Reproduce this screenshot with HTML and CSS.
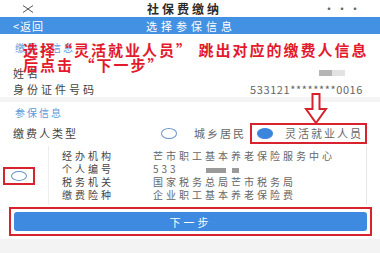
FILE: index.html
```html
<!DOCTYPE html>
<html lang="zh-CN">
<head>
    <meta charset="UTF-8">
    <meta name="viewport" content="width=device-width, initial-scale=1.0">
    <title>社保费缴纳</title>
    <link rel="stylesheet" href="styles.css">
</head>
<body>
    <div class="page">
        <div class="topbar">
            <svg class="close" width="12" height="8" viewBox="0 0 12 8">
                <path d="M1 0.5 L11 7.5 M11 0.5 L1 7.5" stroke="#555" stroke-width="1" fill="none"/>
            </svg>
            <span class="app-title">社保费缴纳</span>
            <span class="more">···</span>
        </div>

        <div class="navbar">
            <span class="back">&lt;返回</span>
            <span class="nav-title">选择参保信息</span>
            <span></span>
        </div>

        <div class="section">
            <div class="section-head">缴费人信息</div>
            <div class="row">
                <span>姓名</span>
                <span class="blur-name"><i class="dark"></i><i class="light"></i></span>
            </div>
            <div class="row">
                <span>身份证件号码</span>
                <span class="idno">533121********0016</span>
            </div>
        </div>

        <div class="gap"></div>

        <div class="section">
            <div class="section-head head2">参保信息</div>
            <div class="type-row">
                <span>缴费人类型</span>
                <div class="choices">
                    <span class="radio"></span>
                    <span class="choice-label">城乡居民</span>
                    <div class="choice-picked">
                        <span class="radio on"></span>
                        <span class="choice-label">灵活就业人员</span>
                    </div>
                </div>
            </div>
        </div>

        <div class="record">
            <div class="record-pick">
                <div class="pick-box"><span class="radio small"></span></div>
            </div>
            <div class="record-card">
                <div class="info"><span class="k">经办机构</span><span>芒市职工基本养老保险服务中心</span></div>
                <div class="info"><span class="k">个人编号</span><span>533 <i class="blot b1"></i><i class="blot b2"></i></span></div>
                <div class="info"><span class="k">税务机关</span><span>国家税务总局芒市税务局</span></div>
                <div class="info"><span class="k">缴费险种</span><span>企业职工基本养老保险费</span></div>
            </div>
        </div>

        <div class="btn-wrap">
            <button class="next">下一步</button>
        </div>

        <div class="footer"></div>

        <!-- annotations drawn over the screenshot -->
        <div class="note">选择“灵活就业人员” 跳出对应的缴费人信息<br>后点击 “下一步”</div>
        <svg class="arrow" width="24" height="31" viewBox="0 0 24 31">
            <polygon points="8.5,1 15.5,1 15.5,16 22,16 12,30 2,16 8.5,16" fill="#fff" stroke="#d8232f" stroke-width="2" stroke-linejoin="miter"/>
        </svg>
    </div>
</body>
</html>
```

FILE: styles.css
```css
body {
    margin: 0;
    padding: 0;
    background-color: #fff;
    font-family: "Noto Sans CJK SC", "Noto Sans", sans-serif;
    color: #444;
}

.page {
    position: relative;
    width: 380px;
    height: 253px;
    overflow: hidden;
}

.topbar {
    height: 17px;
    display: flex;
    align-items: center;
    justify-content: space-between;
    padding: 0 18px 0 22px;
    background-color: #fff;
}

.app-title {
    font-size: 12px;
    font-weight: bold;
    letter-spacing: 3px;
    color: #2a2a2a;
    margin-left: 12px;
}

.more {
    font-size: 12px;
    color: #666;
    letter-spacing: 1px;
}

.navbar {
    height: 17px;
    display: grid;
    grid-template-columns: 1fr auto 1fr;
    align-items: center;
    padding: 0 13px;
    background-color: #4391e2;
    color: #fff;
    font-size: 11px;
}

.back {
    letter-spacing: 1px;
}

.nav-title {
    letter-spacing: 4px;
    margin-left: 2px;
}

.section {
    padding: 0 17px 0 13px;
}

.section-head {
    font-size: 10px;
    color: #5a97dc;
    letter-spacing: 2px;
    line-height: 14px;
    padding: 7px 0 10px 2px;
}

.head2 {
    padding: 4px 0 2px 2px;
}

.row {
    display: flex;
    justify-content: space-between;
    align-items: center;
    height: 16px;
    font-size: 11px;
    letter-spacing: 3px;
    color: #444;
}

.idno {
    letter-spacing: 0.6px;
    color: #666;
}

.blur-name {
    display: flex;
    margin-right: 18px;
}

.blur-name i {
    display: block;
    width: 13px;
    height: 6px;
}

.dark {
    background-color: #b5b5b5;
}

.light {
    background-color: #e2e2e2;
}

.gap {
    height: 5px;
    background-color: #f4f4f4;
}

.type-row {
    display: flex;
    justify-content: space-between;
    align-items: center;
    height: 22px;
    font-size: 11px;
    letter-spacing: 2px;
}

.choices {
    display: flex;
    align-items: center;
    margin-right: -4px;
}

.choice-label {
    color: #666;
    letter-spacing: 2px;
}

.radio {
    display: inline-block;
    width: 14px;
    height: 9px;
    border: 1px solid #6b93c9;
    border-radius: 50%;
    margin-right: 17px;
}

.radio.on {
    background-color: #3b86dc;
    border-color: #3b86dc;
    margin-left: 5px;
    margin-right: 12px;
}

.choice-picked {
    display: flex;
    align-items: center;
    height: 17px;
    border: 2px solid #d8232f;
    padding-right: 2px;
    margin-left: 4px;
}

.record {
    display: flex;
    margin-top: 2px;
}

.record-pick {
    width: 48px;
    display: flex;
    align-items: center;
}

.pick-box {
    width: 28px;
    height: 14px;
    border: 2px solid #d8232f;
    margin-left: 3px;
    display: flex;
    align-items: center;
    justify-content: center;
}

.radio.small {
    margin: 0;
    width: 14px;
    height: 8px;
}

.record-card {
    flex: 1;
    margin-right: 13px;
    padding: 3px 0 4px 13px;
    border-left: 1px solid #eee;
    border-right: 1px solid #e6e6e6;
}

.info {
    display: flex;
    height: 13px;
    align-items: center;
    font-size: 10px;
    letter-spacing: 3px;
    color: #666;
}

.k {
    width: 91px;
    color: #444;
}

.blot {
    display: inline-block;
    height: 5px;
    background-color: #9a9a9a;
    vertical-align: middle;
}

.b1 {
    width: 20px;
    margin-left: 22px;
}

.b2 {
    width: 7px;
    margin-left: 6px;
}

.btn-wrap {
    margin: 2px 8px 0 9px;
    padding: 3px;
    border: 2px solid #d8232f;
}

.next {
    display: block;
    width: 100%;
    height: 19px;
    border: none;
    border-radius: 3px;
    background-color: #3d8ae0;
    color: #fff;
    font-family: "Noto Sans CJK SC", sans-serif;
    font-size: 11px;
    letter-spacing: 3px;
    padding: 0;
}

.footer {
    margin-top: 3px;
    height: 20px;
    background-color: #f3f3f3;
}

.note {
    position: absolute;
    top: 42px;
    left: 23px;
    font-size: 15px;
    font-weight: bold;
    line-height: 15px;
    color: #e31a2c;
    letter-spacing: 2px;
    white-space: nowrap;
}

.arrow {
    position: absolute;
    top: 93px;
    left: 304px;
}
```
